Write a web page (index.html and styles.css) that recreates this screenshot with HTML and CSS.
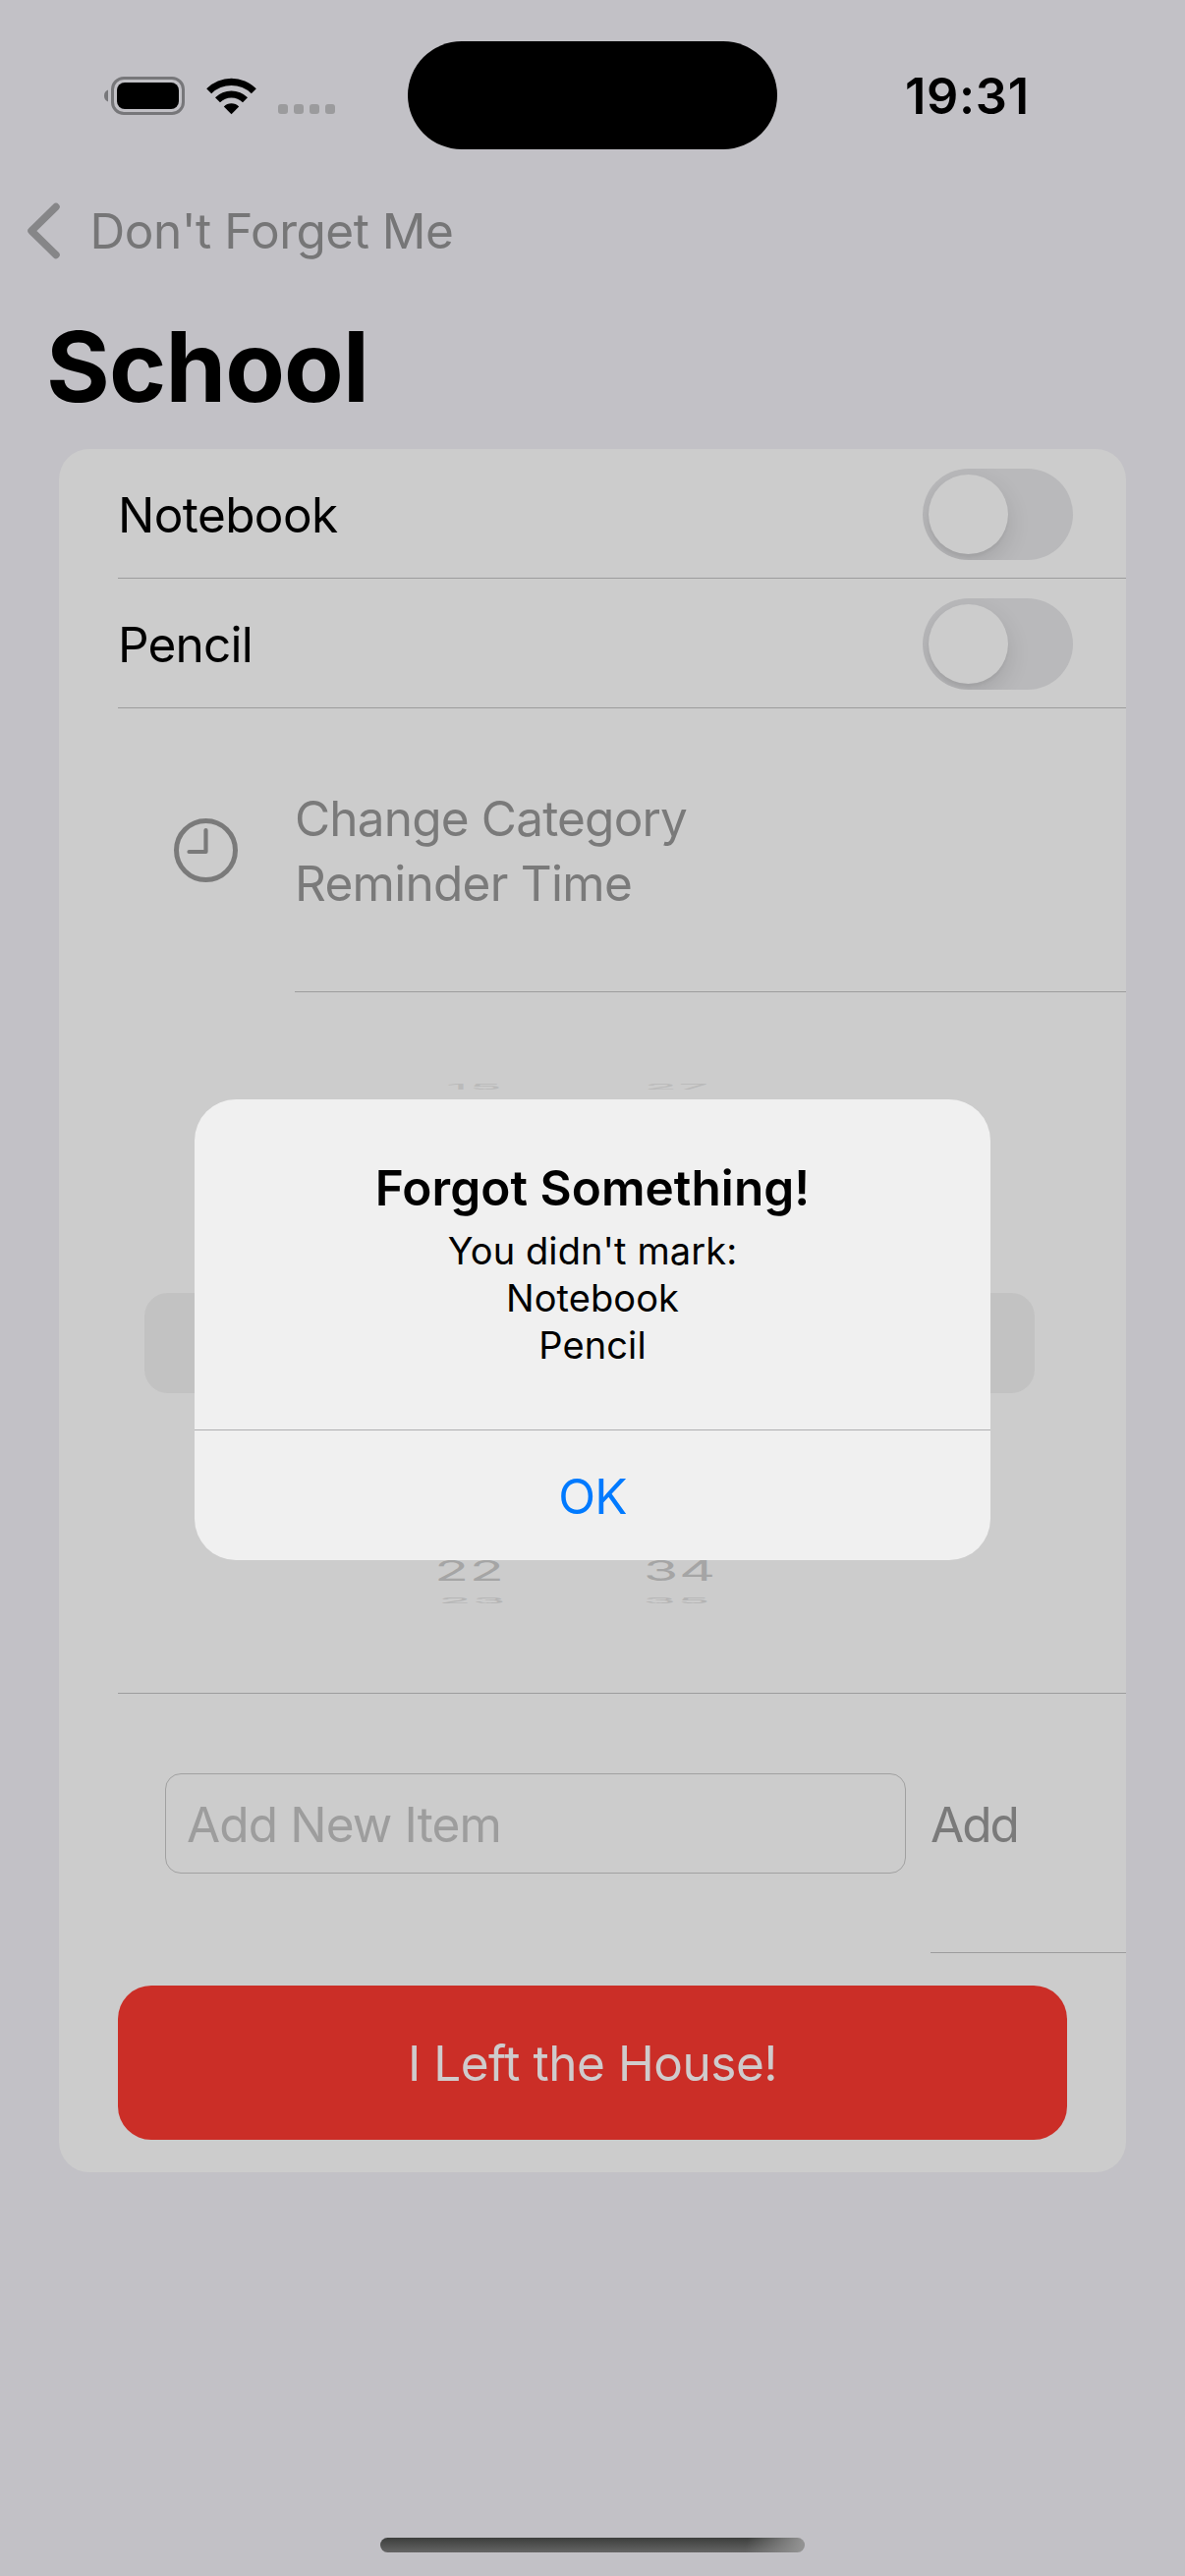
FILE: index.html
```html
<!DOCTYPE html>
<html lang="en">
<head>
<meta charset="utf-8">
<title>School</title>
<link rel="stylesheet" href="styles.css">
</head>
<body>
<div class="screen">
  <header class="status">
    <div class="indicators">
      <svg class="battery" width="83" height="40" viewBox="0 0 83 40">
        <path d="M4 13.5a6.5 6.5 0 0 0 0 12z" fill="#77777a"/>
        <rect x="8.5" y="1.5" width="72" height="36" rx="11.5" fill="none" stroke="#77777a" stroke-width="3"/>
        <rect x="13" y="6" width="63" height="27" rx="8"/>
      </svg>
      <svg class="wifi" width="51" height="38" viewBox="0 0 51 38">
        <path d="M0.2 11.2A36 36 0 0 1 50.8 11.2L45.8 16.2A29 29 0 0 0 5.2 16.2Z"/>
        <path d="M9 20.2A23.6 23.6 0 0 1 42 20.2L37 25.3A16.4 16.4 0 0 0 14 25.3Z"/>
        <path d="M17.8 29.4A11 11 0 0 1 33.2 29.4L25.5 37.2Z"/>
      </svg>
      <div class="dots"><i class="dot"></i><i class="dot"></i><i class="dot"></i><i class="dot"></i></div>
    </div>
    <div class="island"></div>
    <div class="time">19:31</div>
  </header>
  <nav class="nav">
    <svg class="chevron" width="34" height="58" viewBox="0 0 34 58">
      <path d="M30 4.500L5 29L30 53.500" fill="none" stroke="#868688" stroke-width="7.500" stroke-linecap="round" stroke-linejoin="round"/>
    </svg>
    <span class="back">Don't Forget Me</span>
  </nav>
  <h1 class="title">School</h1>

  <main class="card">
    <div class="item"><span class="name">Notebook</span><span class="toggle"><i class="knob"></i></span></div>
    <div class="item"><span class="name tight">Pencil</span><span class="toggle"><i class="knob"></i></span></div>

    <div class="reminder">
      <svg class="clock" width="66" height="66" viewBox="0 0 66 66">
        <g fill="none" stroke="#7a7a7a" stroke-linecap="round" stroke-linejoin="round">
          <circle cx="32.500" cy="32.500" r="30" stroke-width="5"/>
          <path d="M32.500 12V34H15.500" stroke-width="4.200"/>
        </g>
      </svg>
      <div class="reminder-text"><div class="line1">Change Category</div><div class="line2">Reminder Time</div></div>
    </div>

    <div class="picker">
      <div class="wheel far above"><span class="value"><b class="flat">15</b></span><span class="value"><b class="flat">27</b></span></div>
      <div class="band"></div>
      <div class="wheel near"><span class="value"><b class="tilt">22</b></span><span class="value"><b class="tilt">34</b></span></div>
      <div class="wheel far below"><span class="value"><b class="flat">23</b></span><span class="value"><b class="flat">35</b></span></div>
    </div>

    <div class="add-row">
      <div class="field">Add New Item</div>
      <div class="add">Add</div>
    </div>
    <div class="leave">I Left the House!</div>
  </main>
  <div class="home"></div>

  <section class="alert">
    <div class="alert-body">
      <div class="alert-title">Forgot Something!</div>
      <div class="alert-text">You didn't mark:<br>Notebook<br>Pencil</div>
    </div>
    <div class="ok">OK</div>
  </section>
</div>
</body>
</html>
```
FILE: styles.css
```css
* { box-sizing: border-box; }
body { margin: 0; }
.screen {
  position: relative;
  width: 1206px;
  height: 2622px;
  overflow: hidden;
  background: #c2c1c6;
  color: #000;
  font: 400 49.5px/60px Inter, "Liberation Sans", sans-serif;
}

/* status bar */
.status { display: grid; grid-template-columns: 415px 376px 1fr; height: 193px; align-items: center; }
.indicators { display: flex; align-items: center; padding: 2px 0 0 106px; }
.wifi { margin-left: 21px; }
.dots { display: flex; gap: 6px; margin: 27px 0 0 22px; }
.dot { width: 10px; height: 10px; border-radius: 3px; background: #9b9b9d; }
.island { height: 110px; margin-top: 1px; border-radius: 55px; background: #000; }
.time { padding: 2px 0 0 130px; font-size: 50.5px; font-weight: 600; letter-spacing: .7px; }

/* navigation */
.nav { display: flex; align-items: center; height: 84px; padding-left: 27px; }
.back { margin-left: 30.5px; color: #767677; letter-spacing: -.49px; }
.title { margin: 0; padding: 12px 0 0 47px; font-size: 99px; line-height: 168px; font-weight: 700; letter-spacing: -.83px; }

/* list card */
.card { width: 1086px; height: 1754px; margin-left: 60px; border-radius: 31px; background: #ccc; }
.item {
  display: flex;
  align-items: center;
  justify-content: space-between;
  height: 132px;
  margin-left: 60px;
  padding: 2px 54px 0 0;
  border-bottom: 1px solid #9c9c9d;
}
.name { letter-spacing: -.6px; }
.tight { letter-spacing: -.8px; }
.toggle { width: 153px; height: 93px; padding: 6px; border-radius: 47px; background: #b9b9bb; overflow: hidden; }
.knob { display: block; width: 81px; height: 81px; border-radius: 50%; background: #ccc; box-shadow: 0 9px 24px rgba(0, 0, 0, .12), 0 3px 3px rgba(0, 0, 0, .04); }

.reminder { display: flex; height: 289px; padding-left: 117px; color: #7a7a7a; }
.clock { margin-top: 112px; }
.reminder-text { flex: 1; margin-left: 57px; padding-top: 79px; border-bottom: 1px solid #9c9c9d; line-height: 66px; }
.line1 { letter-spacing: -.82px; }
.line2 { letter-spacing: -.72px; }

/* time picker */
.picker { height: 714px; margin-left: 60px; padding-top: 92px; border-bottom: 1px solid #9c9c9d; }
.wheel { display: flex; align-items: center; font-size: 57px; }
.value { width: 120px; text-align: center; }
.tilt, .flat { display: block; font-weight: 400; letter-spacing: 1px; }
.tilt { color: #a5a5a5; transform: scaleY(.51); }
.flat { color: #b4b4b4; font-size: 55px; letter-spacing: 1px; transform: scaleY(.14); }
.far { height: 7px; gap: 86px; }
.above { padding-left: 303px; }
.above .flat { color: #bababa; }
.band { width: 906px; height: 102px; margin: 207px 0 0 27px; border-radius: 24px; background: #c2c2c2; }
.near { height: 22px; margin-top: 170px; padding-left: 298px; gap: 94px; }
.below { margin-top: 15px; padding-left: 301px; gap: 88px; }

/* new item */
.add-row { display: flex; height: 264px; padding-left: 108px; }
.field { width: 754px; height: 102px; margin-top: 81px; padding-left: 21px; border: 1px solid #a1a1a1; border-radius: 16px; color: #9d9d9d; line-height: 102px; letter-spacing: -.86px; }
.add { flex: 1; margin-left: 25px; padding-top: 103px; border-bottom: 1px solid #9c9c9d; color: #7a7a7a; letter-spacing: -2px; }
.leave { height: 157px; margin: 33px 60px 0; border-radius: 34px; background: #cb2e27; color: #cfcbcc; line-height: 158px; text-align: center; letter-spacing: -.46px; }

.home {
  width: 432px;
  height: 15px;
  margin: 372px 0 0 387px;
  border-radius: 8px;
  background: linear-gradient(100deg, rgba(150, 150, 150, 0) 86%, #929292 99%), linear-gradient(#3c3e3c, #656565);
}

/* alert over the list */
.alert { position: absolute; left: 198px; top: 1119px; width: 810px; height: 469px; border-radius: 42px; background: #f0f0f0; text-align: center; }
.alert-body { height: 337px; padding-top: 60px; border-bottom: 1px solid #afafb0; }
.alert-title { font-weight: 600; letter-spacing: .06px; }
.alert-text { margin-top: 10px; font-size: 38px; line-height: 48px; letter-spacing: .1px; }
.ok { padding-top: 37px; color: #007aff; letter-spacing: -.85px; }
```
